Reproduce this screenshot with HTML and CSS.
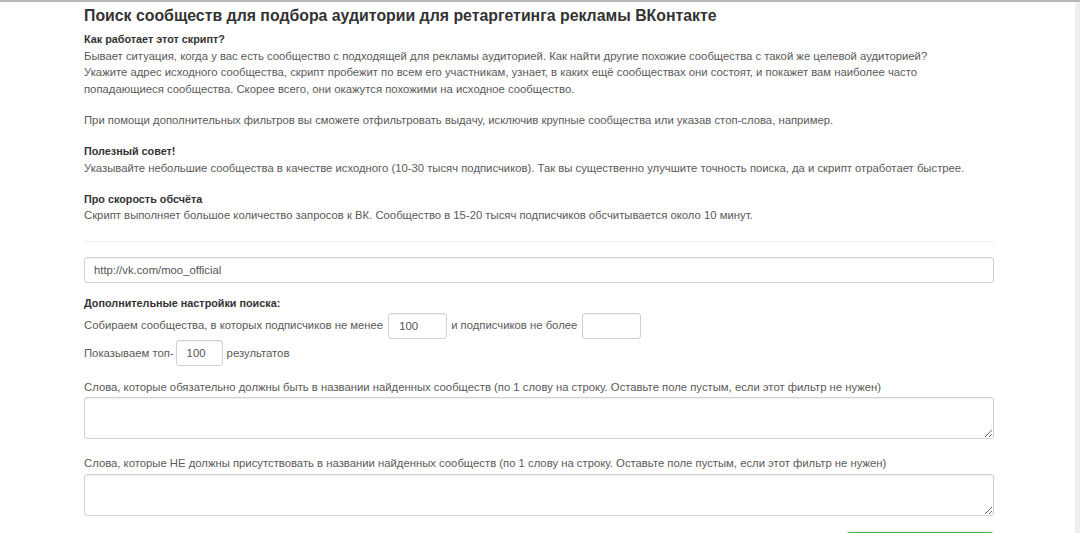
FILE: index.html
```html
<!DOCTYPE html>
<html lang="ru">
<head>
<meta charset="utf-8">
<title>Поиск сообществ</title>
<link rel="stylesheet" href="styles.css">
</head>
<body>
<div class="page">
  <main class="content">
    <h1 class="title">Поиск сообществ для подбора аудитории для ретаргетинга рекламы ВКонтакте</h1>

    <section class="block">
      <div class="label-bold">Как работает этот скрипт?</div>
      <div>Бывает ситуация, когда у вас есть сообщество с подходящей для рекламы аудиторией. Как найти другие похожие сообщества с такой же целевой аудиторией?<br>Укажите адрес исходного сообщества, скрипт пробежит по всем его участникам, узнает, в каких ещё сообществах они состоят, и покажет вам наиболее часто<br>попадающиеся сообщества. Скорее всего, они окажутся похожими на исходное сообщество.</div>
    </section>

    <section class="block">
      <div>При помощи дополнительных фильтров вы сможете отфильтровать выдачу, исключив крупные сообщества или указав стоп-слова, например.</div>
    </section>

    <section class="block">
      <div class="label-bold">Полезный совет!</div>
      <div>Указывайте небольшие сообщества в качестве исходного (10-30 тысяч подписчиков). Так вы существенно улучшите точность поиска, да и скрипт отработает быстрее.</div>
    </section>

    <section class="block last">
      <div class="label-bold">Про скорость обсчёта</div>
      <div>Скрипт выполняет большое количество запросов к ВК. Сообщество в 15-20 тысяч подписчиков обсчитывается около 10 минут.</div>
    </section>

    <hr class="divider">

    <form class="form">
      <input class="field url" type="text" value="http://vk.com/moo_official">

      <div class="label-bold settings-title">Дополнительные настройки поиска:</div>
      <div class="row">
        <span>Собираем сообщества, в которых подписчиков не менее</span>
        <input class="field num num-min" type="text" value="100">
        <span>и подписчиков не более</span>
        <input class="field num num-max" type="text" value="">
      </div>
      <div class="row row2">
        <span>Показываем топ-</span>
        <input class="field num num-top" type="text" value="100">
        <span>результатов</span>
      </div>

      <label class="area-label first">Слова, которые обязательно должны быть в названии найденных сообществ (по 1 слову на строку. Оставьте поле пустым, если этот фильтр не нужен)</label>
      <textarea class="field area"></textarea>

      <label class="area-label">Слова, которые НЕ должны присутствовать в названии найденных сообществ (по 1 слову на строку. Оставьте поле пустым, если этот фильтр не нужен)</label>
      <textarea class="field area"></textarea>

      <div class="actions">
        <button type="button" class="btn">Найти сообщества</button>
      </div>
    </form>
  </main>
</div>
</body>
</html>
```
FILE: styles.css
```css
html, body {
  margin: 0;
  padding: 0;
  background: #ffffff;
}
body {
  border-top: 2px solid #b8b8b8;
  font-family: "Liberation Sans", Arial, sans-serif;
  font-size: 11.3px;
  line-height: 16.6px;
  color: #5a5a5a;
  overflow: hidden;
  height: 531px;
}
.page {
  width: 1075px;
  height: 100%;
  border-right: 5px solid #eeeeee;
}
.content {
  width: 910px;
  margin-left: 84px;
}
.title {
  margin: 0 0 4px 0;
  padding-top: 3px;
  font-size: 15.85px;
  line-height: 22px;
  font-weight: bold;
  color: #333333;
}
.label-bold {
  font-weight: bold;
  color: #333333;
  font-size: 10.8px;
}
.block {
  margin-bottom: 14.5px;
}
.block.last {
  margin-bottom: 0;
}
.divider {
  border: 0;
  border-top: 1px solid #eeeeee;
  margin: 17px 0 15px 0;
  height: 0;
}
.form {
  display: flex;
  flex-direction: column;
}
.field {
  box-sizing: border-box;
  border: 1px solid #d0d0d0;
  border-radius: 3px;
  font-family: "Liberation Sans", Arial, sans-serif;
  font-size: 11.3px;
  color: #555555;
  background: #ffffff;
  box-shadow: inset 0 1px 1px rgba(0,0,0,0.06);
  outline: none;
}
.url {
  width: 910px;
  height: 26px;
  padding: 0 9px;
}
.settings-title {
  margin-top: 11.7px;
}
.row {
  display: flex;
  align-items: center;
  height: 26px;
  margin-top: 1.5px;
}
.num {
  height: 26px;
  padding: 0 10px;
}
.num-min {
  width: 59px;
  margin: 0 4px 0 5px;
}
.num-max {
  width: 59px;
  margin-left: 5px;
}
.num-top {
  width: 47px;
  margin: 0 4px 0 2px;
}
.area-label {
  display: block;
  margin-top: 16.7px;
}
.area-label.first {
  margin-top: 12.5px;
}
.area {
  width: 910px;
  height: 42px;
  margin-top: 1.5px;
  resize: vertical;
  padding: 6px 9px;
}
.actions {
  display: flex;
  justify-content: flex-end;
  margin-top: 16px;
}
.btn {
  width: 148px;
  height: 34px;
  border: 1px solid #4cae4c;
  border-radius: 3px;
  background: #5cb85c;
  color: #ffffff;
  font-family: "Liberation Sans", Arial, sans-serif;
  font-size: 11.3px;
}
```
